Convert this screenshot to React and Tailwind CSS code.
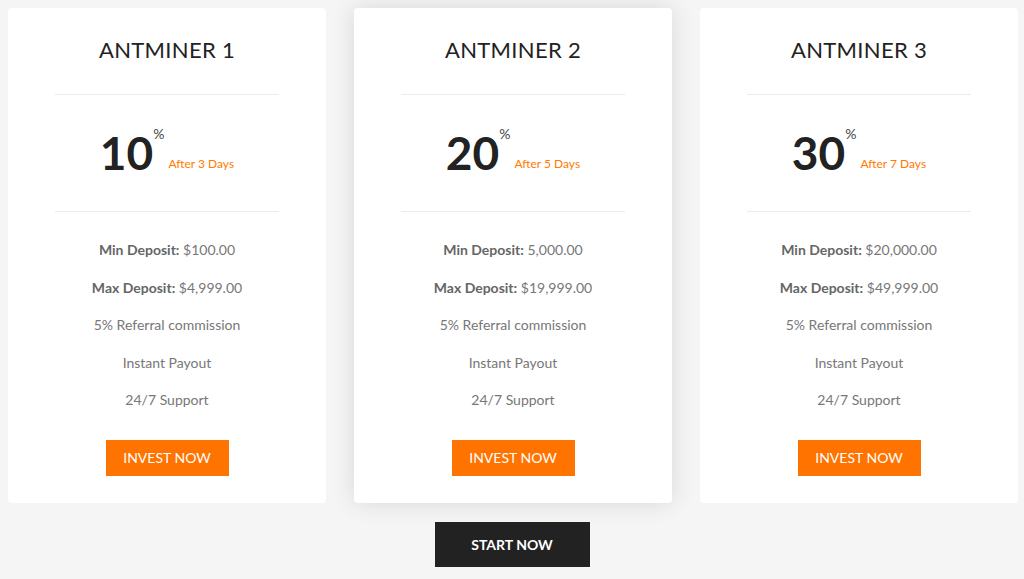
import React from 'react';

const plans = [
  { name: 'ANTMINER 1', rate: '10', days: 'After 3 Days', min: '$100.00', max: '$4,999.00' },
  { name: 'ANTMINER 2', rate: '20', days: 'After 5 Days', min: '5,000.00', max: '$19,999.00', featured: true },
  { name: 'ANTMINER 3', rate: '30', days: 'After 7 Days', min: '$20,000.00', max: '$49,999.00' },
];

function PlanCard({ plan }) {
  return (
    <div
      className={
        'w-[318px] bg-white rounded-[4px] px-[47px] pt-[29px] pb-[27px] flex flex-col items-center ' +
        (plan.featured ? 'shadow-[0_0_24px_rgba(0,0,0,0.12)]' : '')
      }
    >
      <h3 className="text-[22px] leading-[26px] text-[#222] tracking-[0.3px]">{plan.name}</h3>
      <div className="w-full h-px bg-[#ebebeb] mt-[31px]" />
      <div className="w-full h-[116px] flex items-center justify-center">
        <div className="flex items-end">
          <span className="text-[46px] leading-[46px] font-bold text-[#222]">{plan.rate}</span>
          <span className="self-start text-[14px] leading-[14px] text-[#444] -mt-[3px]">%</span>
          <span className="text-[12px] leading-[12px] text-[#ff7a00] ml-[4px] mb-[6px]">{plan.days}</span>
        </div>
      </div>
      <div className="w-full h-px bg-[#ebebeb]" />
      <ul className="w-full pt-[19px] text-[14px] text-[#777] text-center">
        <li className="leading-[37.5px]">
          <span className="font-bold text-[#666]">Min Deposit:</span> {plan.min}
        </li>
        <li className="leading-[37.5px]">
          <span className="font-bold text-[#666]">Max Deposit:</span> {plan.max}
        </li>
        <li className="leading-[37.5px]">5% Referral commission</li>
        <li className="leading-[37.5px]">Instant Payout</li>
        <li className="leading-[37.5px]">24/7 Support</li>
      </ul>
      <button className="mt-[21px] w-[123px] h-[36px] bg-[#ff7300] text-white text-[14px] uppercase">
        Invest Now
      </button>
    </div>
  );
}

export default function App() {
  return (
    <div className="w-[1024px] h-[579px] bg-[#f5f5f5] font-['Lato',sans-serif] overflow-hidden">
      <div className="flex gap-[28px] pl-[8px] pt-[8px]">
        {plans.map((p) => (
          <PlanCard key={p.name} plan={p} />
        ))}
      </div>
      <div className="flex justify-center mt-[19px]">
        <button className="w-[155px] h-[45px] bg-[#222] text-white text-[14px] font-bold uppercase">
          Start Now
        </button>
      </div>
    </div>
  );
}
